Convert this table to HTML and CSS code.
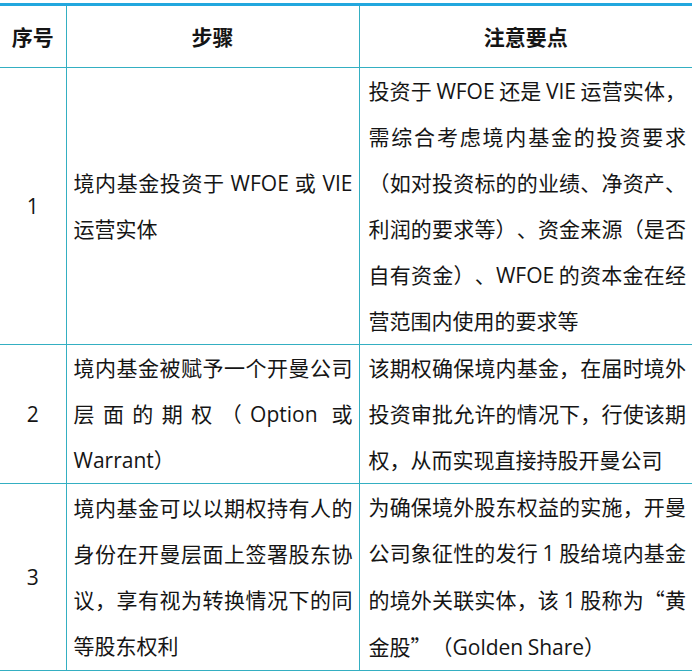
FILE: index.html
```html
<!DOCTYPE html>
<html lang="zh-CN">
<head>
<meta charset="utf-8">
<title>境内基金投资步骤</title>
<link rel="stylesheet" href="styles.css">
</head>
<body>
<table class="steps">
  <colgroup>
    <col class="c-no">
    <col class="c-step">
    <col class="c-note">
  </colgroup>
  <thead>
    <tr>
      <th>序号</th>
      <th>步骤</th>
      <th>注意要点</th>
    </tr>
  </thead>
  <tbody>
    <tr>
      <td class="no">1</td>
      <td class="step">境内基金投资于 WFOE 或 VIE 运营实体</td>
      <td class="note">投资于 WFOE 还是 VIE 运营实体，需综合考虑境内基金的投资要求（如对投资标的的业绩、净资产、利润的要求等）、资金来源（是否自有资金）、WFOE 的资本金在经营范围内使用的要求等</td>
    </tr>
    <tr>
      <td class="no">2</td>
      <td class="step">境内基金被赋予一个开曼公司层面的期权（Option 或 Warrant）</td>
      <td class="note">该期权确保境内基金，在届时境外投资审批允许的情况下，行使该期权，从而实现直接持股开曼公司</td>
    </tr>
    <tr>
      <td class="no">3</td>
      <td class="step">境内基金可以以期权持有人的身份在开曼层面上签署股东协议，享有视为转换情况下的同等股东权利</td>
      <td class="note">为确保境外股东权益的实施，开曼公司象征性的发行 1 股给境内基金的境外关联实体，该 1 股称为<span class="cjk">“</span>黄金股<span class="cjk">”</span>（Golden Share）</td>
    </tr>
  </tbody>
</table>
</body>
</html>
```
FILE: styles.css
```css
html, body {
  margin: 0;
  padding: 0;
  background: #ffffff;
}
body {
  padding-top: 3px;
  font-family: "Open Sans", "Noto Sans CJK SC", sans-serif;
  color: #151515;
  overflow: hidden;
  text-spacing-trim: space-all;
}
.steps {
  width: 692px;
  table-layout: fixed;
  border-collapse: collapse;
  border-top: 3px solid #22a7de;
}
.c-no { width: 66px; }
.c-step { width: 293px; }
.c-note { width: 333px; }

.steps th,
.steps td {
  border: 1px solid #34afc2;
  font-size: 21px;
  line-height: 46px;
  vertical-align: middle;
}
.steps tr > :first-child { border-left: none; }
.steps tr > :last-child { border-right: none; }
.steps thead th { border-top: none; }

.steps th {
  height: 61px;
  padding: 0;
  font-weight: 700;
  text-align: center;
}
.steps td {
  padding: 0 6px 0 7px;
}
.steps td.no {
  text-align: center;
  padding: 0;
}
.steps td.step,
.steps td.note {
  text-align: justify;
}
.steps td.note {
  padding: 0 6px 0 9px;
  word-spacing: -1px;
}
.cjk {
  font-family: "Noto Sans CJK SC", sans-serif;
}
```
